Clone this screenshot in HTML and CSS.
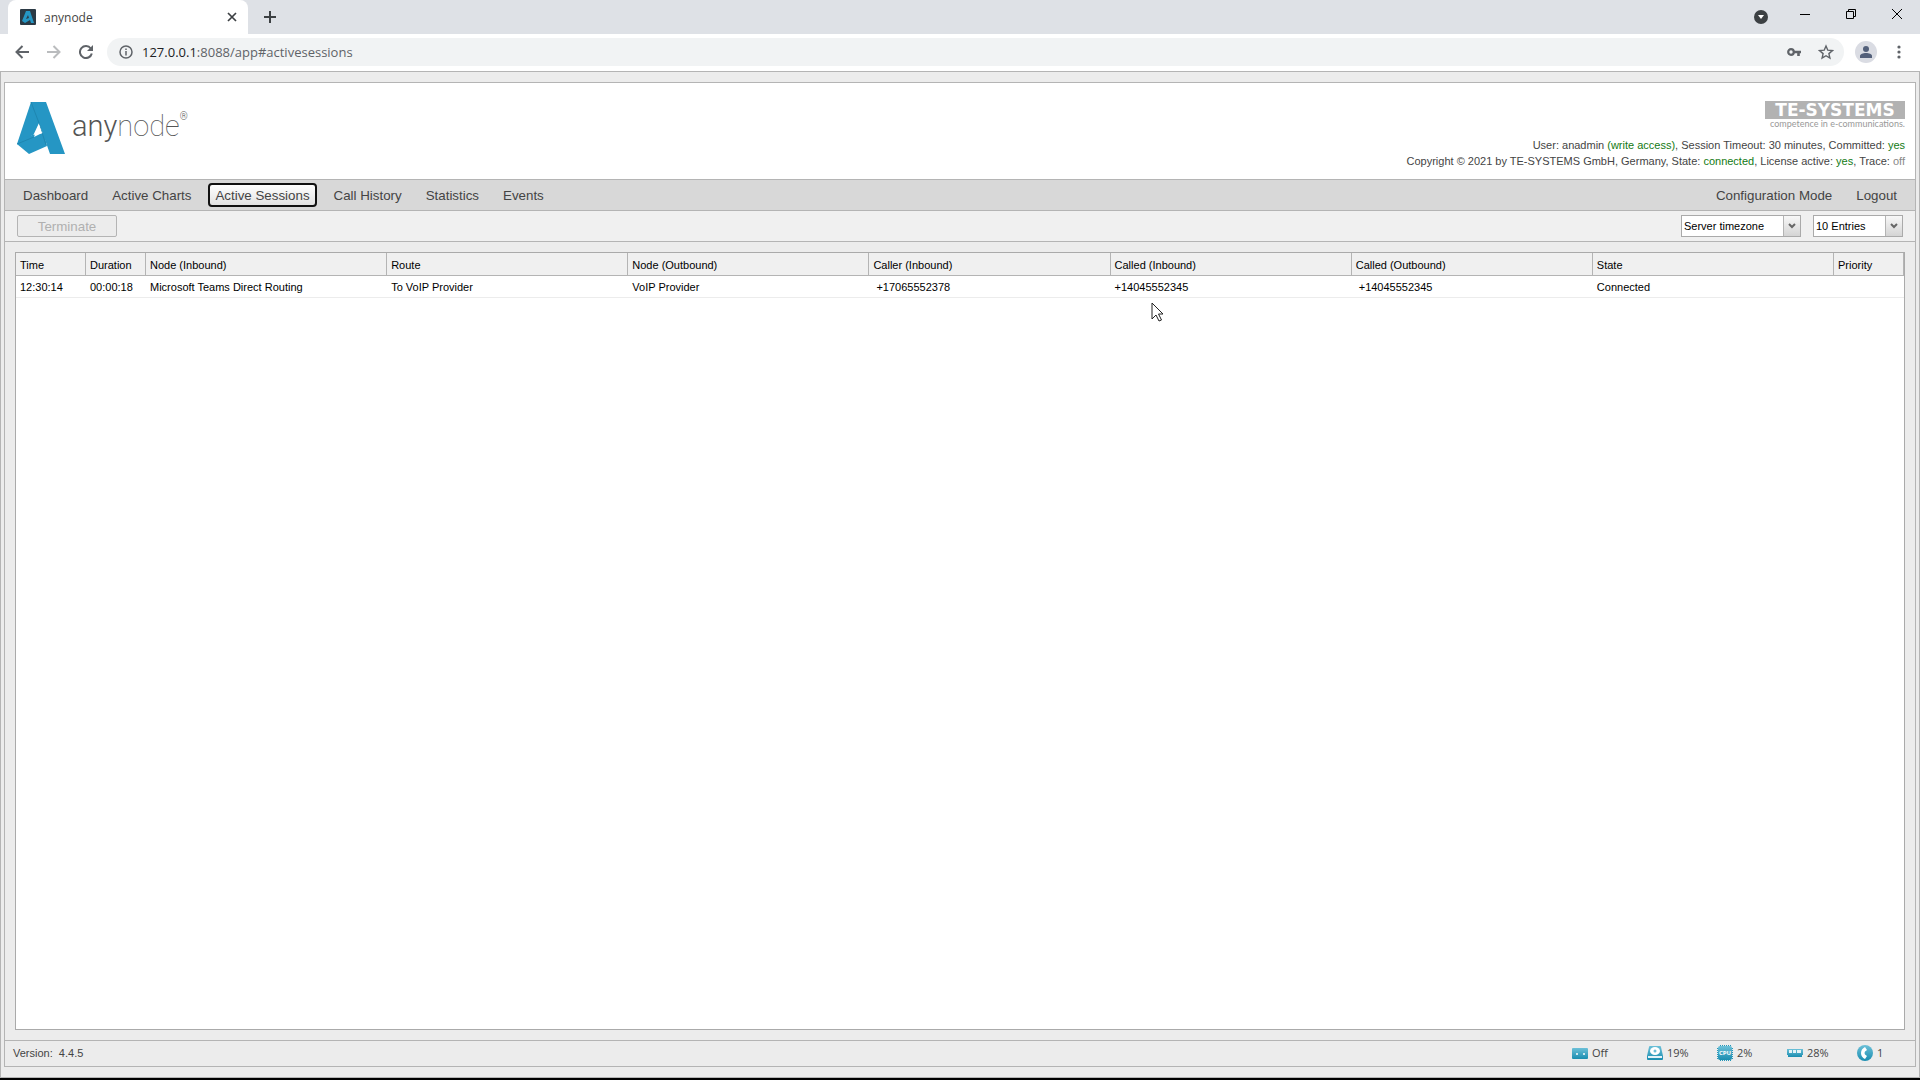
FILE: index.html
```
<!DOCTYPE html>
<html lang="en">

  <head>
    <meta charset="UTF-8">
    <meta name="viewport" content="width=device-width, initial-scale=1.0">
    <title>anynode</title>
    <link rel="stylesheet" href="styles.css">
  </head>

  <body>
    <div class="tab-strip">
      <div class="tab">
        <svg class="favicon" viewBox="0 0 16 16" width="16" height="16">
          <rect width="16" height="16" rx="1" fill="#2b3a45"/>
          <path d="M6 2h4l4 12h-3l-1-3-5 3-3-2z" fill="#2596c4"/>
          <path d="M8 6l1 3-3 1z" fill="#2b3a45"/>
        </svg>
        <span class="tab-title">anynode</span>
        <button class="icon-btn" aria-label="Close tab">
          <svg viewBox="0 0 10 10" width="10" height="10"><path d="M1 1l8 8M9 1L1 9" stroke="#3c4043" stroke-width="1.700"/></svg>
        </button>
      </div>
      <button class="icon-btn new-tab" aria-label="New tab">
        <svg viewBox="0 0 12 12" width="12" height="12"><path d="M6 0v12M0 6h12" stroke="#3c4043" stroke-width="2"/></svg>
      </button>
      <div class="window-controls">
        <button class="icon-btn tab-search" aria-label="Search tabs">
          <svg viewBox="0 0 14 14" width="14" height="14"><circle cx="7" cy="7" r="7" fill="#3c4043"/><path d="M4 5h6l-3 4z" fill="#fff"/></svg>
        </button>
        <button class="icon-btn" aria-label="Minimize">
          <svg viewBox="0 0 10 10" width="10" height="10"><path d="M0 5.500h10" stroke="#000"/></svg>
        </button>
        <button class="icon-btn" aria-label="Restore">
          <svg viewBox="0 0 10 10" width="10" height="10" fill="none" stroke="#000"><path d="M.5 2.500h7v7h-7zM2.500 2.500v-2h7v7h-2"/></svg>
        </button>
        <button class="icon-btn" aria-label="Close">
          <svg viewBox="0 0 10 10" width="10" height="10"><path d="M0 0l10 10M10 0L0 10" stroke="#000"/></svg>
        </button>
      </div>
    </div>

    <div class="address-row">
      <button class="icon-btn" aria-label="Back">
        <svg viewBox="0 0 14 14" width="14" height="14" fill="none" stroke="#5f6368" stroke-width="2"><path d="M14 7H1.500M7.500 1l-6 6 6 6"/></svg>
      </button>
      <button class="icon-btn" aria-label="Forward">
        <svg viewBox="0 0 14 14" width="14" height="14" fill="none" stroke="#babcbe" stroke-width="2"><path d="M0 7h12.500M6.500 1l6 6-6 6"/></svg>
      </button>
      <button class="icon-btn" aria-label="Reload">
        <svg viewBox="0 0 14 14" width="14" height="14"><path d="M11.800 3.500A6 6 0 1 0 12.800 8.500" fill="none" stroke="#5f6368" stroke-width="2"/><path d="M14 0v6H8z" fill="#5f6368"/></svg>
      </button>
      <div class="address-bar">
        <svg viewBox="0 0 14 14" width="14" height="14"><circle cx="7" cy="7" r="6" fill="none" stroke="#5f6368" stroke-width="1.500"/><path d="M7 6v4.500M7 3.500V5" stroke="#5f6368" stroke-width="1.500"/></svg>
        <div class="url">127.0.0.1<span>:8088/app#activesessions</span></div>
        <svg class="key" viewBox="0 0 14 8" width="14" height="8"><circle cx="4" cy="4" r="2.800" fill="none" stroke="#5f6368" stroke-width="2.200"/><path d="M6.500 2.800H14v2.400h-1.200V8h-2.600V5.200H6.500z" fill="#5f6368"/></svg>
        <svg viewBox="0 0 16 16" width="16" height="16"><path d="M8 2l1.800 4.200 4.600.4-3.500 3 1 4.500L8 11.700l-3.900 2.400 1-4.500-3.500-3 4.600-.4z" fill="none" stroke="#5f6368" stroke-width="1.400"/></svg>
      </div>
      <button class="icon-btn" aria-label="Profile">
        <svg viewBox="0 0 22 22" width="22" height="22"><circle cx="11" cy="11" r="11" fill="#dadce3"/><circle cx="11" cy="8" r="3" fill="#53607a"/><path d="M5 17v-2c0-2 3-3 6-3s6 1 6 3v2z" fill="#53607a"/></svg>
      </button>
      <button class="icon-btn menu-btn" aria-label="Menu">
        <svg viewBox="0 0 4 14" width="4" height="14" fill="#5f6368"><circle cx="2" cy="2" r="1.600"/><circle cx="2" cy="7" r="1.600"/><circle cx="2" cy="12" r="1.600"/></svg>
      </button>
    </div>

    <div class="page">
      <div class="app">
        <header class="header">
          <div class="logo">
            <svg viewBox="0 0 48 52" width="48" height="52">
              <path d="M14 0h15l19 52H33l-7-20-4-11-7 15z" fill="#2596c4"/>
              <path d="M14 0l7 21-8 16L0 42z" fill="#2596c4"/>
              <path d="M0 42l6-7 21-4 3 13-18 8z" fill="#2596c4"/>
              <path d="M14 0l8 21 7 22M0 42l17-7" fill="none" stroke="#1f86b0"/>
              <path d="M22 22l-5 13 8-4z" fill="#fff"/>
            </svg>
            <div class="logo-text">any<span>node</span><sup>®</sup></div>
          </div>
          <div class="header-info">
            <div class="vendor">TE-SYSTEMS</div>
            <div class="vendor-claim">competence in e-communications.</div>
            <p>User: anadmin <span class="ok">(write access)</span>, Session Timeout: 30 minutes, Committed: <span class="ok">yes</span></p>
            <p>Copyright © 2021 by TE-SYSTEMS GmbH, Germany, State: <span class="ok">connected</span>, License active: <span class="ok">yes</span>, Trace: <span class="off">off</span></p>
          </div>
        </header>

        <nav class="nav">
          <button>Dashboard</button>
          <button>Active Charts</button>
          <button class="active">Active Sessions</button>
          <button>Call History</button>
          <button>Statistics</button>
          <button>Events</button>
          <button class="nav-right">Configuration Mode</button>
          <button>Logout</button>
        </nav>

        <div class="toolbar">
          <button class="terminate" disabled>Terminate</button>
          <div class="select-box timezone">
            <select aria-label="Timezone"><option>Server timezone</option></select>
            <span class="arrow"><svg viewBox="0 0 8 6" width="8" height="6"><path d="M1 1l3 3 3-3" fill="none" stroke="#666" stroke-width="2"/></svg></span>
          </div>
          <div class="select-box entries">
            <select aria-label="Entries"><option>10 Entries</option></select>
            <span class="arrow"><svg viewBox="0 0 8 6" width="8" height="6"><path d="M1 1l3 3 3-3" fill="none" stroke="#666" stroke-width="2"/></svg></span>
          </div>
        </div>

        <main class="sessions">
          <table>
            <colgroup>
              <col class="col-time"><col class="col-duration"><col><col><col><col><col><col><col><col class="col-priority">
            </colgroup>
            <thead>
              <tr>
                <th>Time</th>
                <th>Duration</th>
                <th>Node (Inbound)</th>
                <th>Route</th>
                <th>Node (Outbound)</th>
                <th>Caller (Inbound)</th>
                <th>Called (Inbound)</th>
                <th>Called (Outbound)</th>
                <th>State</th>
                <th>Priority</th>
              </tr>
            </thead>
            <tbody>
              <tr>
                <td>12:30:14</td>
                <td>00:00:18</td>
                <td>Microsoft Teams Direct Routing</td>
                <td>To VoIP Provider</td>
                <td>VoIP Provider</td>
                <td class="number">+17065552378</td>
                <td>+14045552345</td>
                <td class="number">+14045552345</td>
                <td>Connected</td>
                <td></td>
              </tr>
            </tbody>
          </table>
          <!-- mouse pointer -->
          <svg class="cursor" viewBox="0 0 14 20" width="14" height="20"><path d="M1 1v16l4-4 3 6 2.500-1-3-6H12z" fill="#fff" stroke="#222"/></svg>
        </main>

        <footer class="footer">
          <span class="version">Version: &nbsp;4.4.5</span>
          <div class="status recording">
            <svg viewBox="0 0 16 16" width="16" height="16">
              <defs>
                <linearGradient id="teal" x2="0" y2="1"><stop stop-color="#6cc0d8"/><stop offset="1" stop-color="#1a8db0"/></linearGradient>
              </defs>
              <rect y="3" width="16" height="11" rx="1" fill="url(#teal)"/>
              <circle cx="5" cy="9" r="1" fill="#fff"/><circle cx="12" cy="9" r="1" fill="#fff"/>
            </svg>
            <span>Off</span>
          </div>
          <div class="status">
            <svg viewBox="0 0 16 16" width="16" height="16">
              <path d="M3 1h10q1 0 1 1l2 9v3q0 1-1 1H1q-1 0-1-1v-3l2-9q0-1 1-1z" fill="url(#teal)"/>
              <path d="M1 11h14v2H1z" fill="#e4f3f8"/>
              <ellipse cx="8" cy="6" rx="5" ry="4" fill="#fff"/>
              <circle cx="8" cy="6" r="1.500" fill="#6cbcd6"/>
            </svg>
            <span>19%</span>
          </div>
          <div class="status">
            <svg viewBox="0 0 16 16" width="16" height="16">
              <path d="M3 .5h11M3 15.500h11M.5 3v11M15.500 3v11" stroke="#2596b8" stroke-dasharray="1 1"/>
              <rect x="1" y="1" width="14" height="14" rx="2" fill="url(#teal)"/>
              <text class="cpu" x="8" y="10" text-anchor="middle">CPU</text>
            </svg>
            <span>2%</span>
          </div>
          <div class="status">
            <svg viewBox="0 0 16 16" width="16" height="16"><path d="M0 4h16v6h-1v2H1v-2H0z" fill="url(#teal)"/><path d="M2 5h3v3H2zM6 5h3v3H6zM10 5h4v3h-4z" fill="#e4f3f8"/></svg>
            <span>28%</span>
          </div>
          <div class="status calls">
            <svg viewBox="0 0 16 16" width="16" height="16"><circle cx="8" cy="8" r="8" fill="url(#teal)"/><path d="M8 2l2 3-2 1.500q-1 1.500 0 3L10 11l-2 3Q4 12 4 8t4-6z" fill="#fff"/></svg>
            <span>1</span>
          </div>
        </footer>
      </div>
    </div>
    <div class="taskbar"></div>
  </body>

</html>
```
FILE: styles.css
```
* {
  box-sizing: border-box;
}

body {
  margin: 0;
  min-height: 100vh;
  display: flex;
  flex-direction: column;
  background-color: #ececec;
  color: #444;
  font-family: "Liberation Sans", Arial, sans-serif;
  font-size: 11px;
}

svg {
  display: block;
  flex-shrink: 0;
}

/* Browser window */
.icon-btn {
  padding: 0;
  border: none;
  background: none;
}

.tab-strip {
  display: flex;
  align-items: center;
  height: 34px;
  padding-left: 8px;
  background-color: #dee1e6;
}

.tab {
  display: flex;
  align-items: center;
  width: 240px;
  height: 34px;
  padding: 0 11px 0 12px;
  background-color: #fff;
  border-radius: 8px 8px 0 0;
}

.tab-title {
  flex-grow: 1;
  margin-left: 8px;
  font-family: "Open Sans", sans-serif;
  font-size: 12px;
}

.new-tab {
  margin-left: 16px;
}

.window-controls {
  display: flex;
  align-items: center;
  gap: 36px;
  margin-left: auto;
  padding-right: 18px;
  padding-bottom: 6px;
}

.tab-search {
  margin-right: -4px;
  padding-top: 6px;
}

.address-row {
  display: flex;
  align-items: center;
  gap: 18px;
  height: 37px;
  padding: 0 19px 2px 15px;
  background-color: #fff;
}

.address-bar {
  flex-grow: 1;
  display: flex;
  align-items: center;
  height: 28px;
  margin: 0 -7px 0 -4px;
  padding: 0 10px 0 12px;
  border-radius: 14px;
  background-color: #f1f3f4;
}

.url {
  flex-grow: 1;
  margin-left: 9px;
  color: #202124;
  font-family: "Open Sans", sans-serif;
  font-size: 13px;
}

.url span {
  color: #5f6368;
}

.key {
  margin-right: 17px;
}

.menu-btn {
  margin-left: 2px;
}

/* Application */
.page {
  flex-grow: 1;
  display: flex;
  padding: 10px 3px;
  border: 1px solid #b4b4b4;
}

.app {
  flex-grow: 1;
  display: flex;
  flex-direction: column;
  border: 1px solid #b4b4b4;
}

.header {
  display: flex;
  justify-content: space-between;
  height: 96px;
  padding: 18px 10px 0 12px;
  background-color: #fff;
}

.logo {
  display: flex;
  padding-top: 1px;
}

.logo-text {
  margin-left: 7px;
  color: #555;
  font-family: Roboto, sans-serif;
  font-size: 29px;
  font-weight: 300;
  line-height: 48px;
}

.logo-text span {
  font-weight: 100;
}

.logo-text sup {
  font-size: 10px;
  line-height: 1;
  vertical-align: 16px;
}

.header-info {
  display: flex;
  flex-direction: column;
  align-items: flex-end;
}

.header-info p {
  margin: 0;
  line-height: 16px;
}

.vendor {
  width: 140px;
  background-color: #b2b2b2;
  color: #fff;
  font-family: "DejaVu Sans", sans-serif;
  font-size: 17px;
  font-weight: bold;
  line-height: 18px;
  text-align: center;
}

.vendor-claim {
  margin-bottom: 8px;
  color: #999;
  font-family: Lato, sans-serif;
  font-size: 9px;
  line-height: 10px;
}

.ok {
  color: #137a13;
}

.off {
  color: #888;
}

.nav {
  display: flex;
  align-items: center;
  gap: 10px;
  height: 32px;
  padding: 0 11px;
  border: solid #b4b4b4;
  border-width: 1px 0;
  background-color: #d8d8d8;
}

.nav button {
  height: 24px;
  padding: 0 5px;
  border: 2px solid transparent;
  border-radius: 4px;
  background: none;
  color: #444;
  font-family: inherit;
}

.nav .active {
  border-color: #111;
  background: linear-gradient(#fff, #e2e2e2);
}

.nav .nav-right {
  margin-left: auto;
}

.toolbar {
  display: flex;
  align-items: center;
  height: 31px;
  padding: 0 12px;
  border-bottom: 1px solid #b4b4b4;
  background-color: #f0f0f0;
}

.terminate {
  width: 100px;
  height: 22px;
  border: 1px solid #b4b4b4;
  border-radius: 2px;
  background-color: #ececec;
  color: #b0b0b0;
  font-family: inherit;
}

.select-box {
  display: flex;
  height: 22px;
  border: 1px solid #aaa;
  background-color: #fff;
}

.select-box select {
  flex-grow: 1;
  padding: 0 2px;
  border: none;
  background: none;
  color: #000;
  font-family: inherit;
  font-size: 11px;
  appearance: none;
}

.arrow {
  display: flex;
  align-items: center;
  justify-content: center;
  width: 17px;
  border-left: 1px solid #b4b4b4;
  background: linear-gradient(#f8f8f8, #d4d4d4);
}

.timezone {
  width: 120px;
  margin-left: auto;
  margin-right: 12px;
}

.entries {
  width: 90px;
}

.sessions {
  position: relative;
  flex-grow: 1;
  margin: 10px;
  border: 1px solid #aaa;
  background-color: #fff;
}

table {
  width: 100%;
  table-layout: fixed;
  border-collapse: separate;
  border-spacing: 0;
  color: #000;
}

th, td {
  padding: 0 4px;
  font-weight: normal;
  text-align: left;
  white-space: nowrap;
}

th {
  height: 23px;
  padding-top: 2px;
  border-right: 1px solid #b4b4b4;
  border-bottom: 1px solid #b4b4b4;
  background-color: #f0f0f0;
}

td {
  height: 22px;
  border-bottom: 1px solid #ececec;
}

.number {
  padding-left: 7px;
}

.col-time {
  width: 70px;
}

.col-duration {
  width: 60px;
}

.col-priority {
  width: 70px;
}

.cursor {
  position: absolute;
  top: 49px;
  left: 1135px;
}

.footer {
  display: flex;
  align-items: center;
  height: 26px;
  padding: 0 32px 2px 8px;
  border-top: 1px solid #b4b4b4;
}

.version {
  flex-grow: 1;
}

.status {
  display: flex;
  align-items: center;
  gap: 4px;
  width: 70px;
  font-family: "Open Sans", sans-serif;
}

.recording {
  width: 75px;
}

.calls {
  width: 26px;
}

.cpu {
  fill: #fff;
  font-size: 6px;
  font-weight: bold;
}

.taskbar {
  height: 2px;
  background-color: #000;
}
```
